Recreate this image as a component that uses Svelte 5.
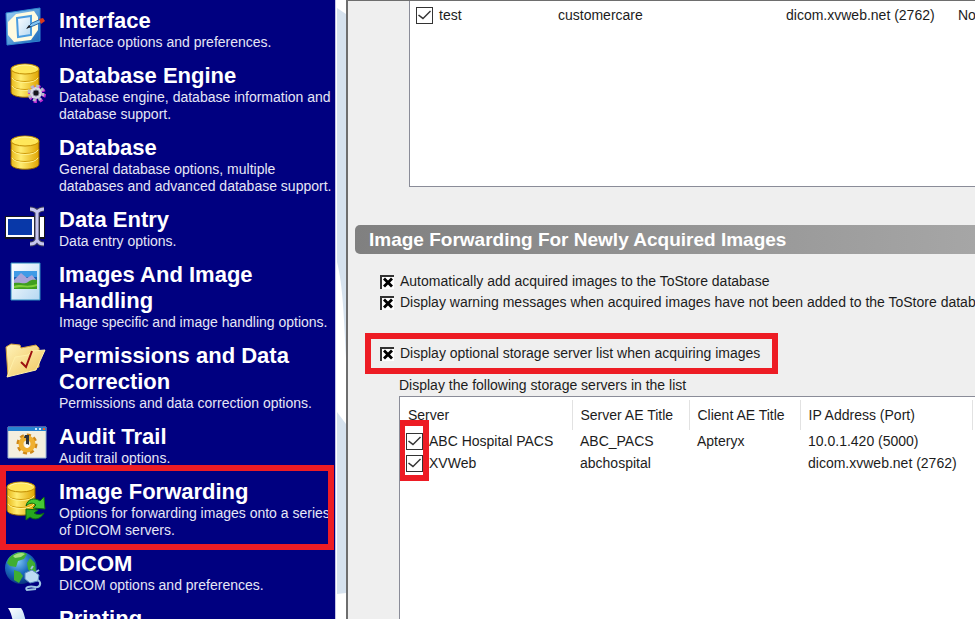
<script>
    let sections = [
        { id: 'interface', title: 'Interface', text: 'Interface options and preferences.' },
        { id: 'engine', title: 'Database Engine', text: 'Database engine, database information and database support.' },
        { id: 'database', title: 'Database', text: 'General database options, multiple databases and advanced database support.' },
        { id: 'entry', title: 'Data Entry', text: 'Data entry options.' },
        { id: 'images', title: 'Images And Image Handling', text: 'Image specific and image handling options.' },
        { id: 'permissions', title: 'Permissions and Data Correction', text: 'Permissions and data correction options.' },
        { id: 'audit', title: 'Audit Trail', text: 'Audit trail options.' },
        { id: 'forwarding', title: 'Image Forwarding', text: 'Options for forwarding images onto a series of DICOM servers.' },
        { id: 'dicom', title: 'DICOM', text: 'DICOM options and preferences.' },
        { id: 'printing', title: 'Printing', text: '' },
    ]
    let active = 'forwarding'

    let forward_servers = [
        { enabled: true, name: 'test', server_ae: 'customercare', client_ae: '', address: 'dicom.xvweb.net (2762)', extra: 'No' },
    ]

    let storage_servers = [
        { enabled: true, name: 'ABC Hospital PACS', server_ae: 'ABC_PACS', client_ae: 'Apteryx', address: '10.0.1.420 (5000)' },
        { enabled: true, name: 'XVWeb', server_ae: 'abchospital', client_ae: '', address: 'dicom.xvweb.net (2762)' },
    ]

    let auto_add = true
    let show_warning = true
    let show_list = true
</script>

<svg class="defs" aria-hidden="true">
    <defs>
        <linearGradient id="gold">
            <stop offset="0" stop-color="#e8b818" />
            <stop offset="0.35" stop-color="#ffec70" />
            <stop offset="1" stop-color="#e0a400" />
        </linearGradient>
        <linearGradient id="blue" x2="1" y2="1">
            <stop offset="0" stop-color="#9fd4f8" />
            <stop offset="1" stop-color="#1565b8" />
        </linearGradient>
        <linearGradient id="paper" x2="1" y2="1">
            <stop offset="0" stop-color="#ffffff" />
            <stop offset="1" stop-color="#b5d8f2" />
        </linearGradient>
        <linearGradient id="folder" x2="1" y2="1">
            <stop offset="0" stop-color="#fff3ba" />
            <stop offset="1" stop-color="#efc45a" />
        </linearGradient>
        <radialGradient id="globe" cx="0.4" cy="0.3" r="0.75">
            <stop offset="0" stop-color="#7cc6f4" />
            <stop offset="0.5" stop-color="#1c6cc0" />
            <stop offset="1" stop-color="#062c78" />
        </radialGradient>
    </defs>
</svg>

{#snippet barrel()}
    <path d="M6 6v23c0 7 28 7 28 0V6z" fill="url(#gold)" stroke="#8a5a00" />
    <path d="M6 14c2 6 26 6 28 0M6 22c2 6 26 6 28 0" fill="none" stroke="#cf9a08" />
    <path d="M7 15c3 6 23 6 26 0M7 23c3 6 23 6 26 0" fill="none" stroke="#fff08a" />
    <ellipse cx="20" cy="6" rx="14" ry="5" fill="#ffe75a" stroke="#c08c00" />
    <path d="M9 5c4-4 18-4 22 0" fill="none" stroke="#fff7a8" />
{/snippet}

{#snippet icon(id)}
    <svg class="icon" viewBox="0 0 40 40" aria-hidden="true">
        {#if id === 'interface'}
            <path d="M1 5 35 0v33L2 37z" fill="url(#blue)" stroke="#2f86d0" />
            <path d="M11 6 29 3l4 6v13l-7 10-17 2-6-7V14z" fill="#fffbe0" />
            <path d="m12 10 14-2v19l-13 2z" fill="url(#paper)" stroke="#4a9de0" stroke-width="2" />
            <path d="m22 20 5-5 9-4 1 3-9 4z" fill="#7ec3f2" stroke="#2868a8" />
            <path d="m21 21 3-4 2 2z" fill="#222" />
            <path d="m34 11 4-1 2 3-4 3z" fill="#d93a1c" />
        {:else if id === 'engine'}
            {@render barrel()}
            <g transform="translate(31 30)">
                <circle cx="1" cy="1" r="7" fill="none" stroke="#c02bd0" stroke-width="4" stroke-dasharray="3 2.5" />
                <circle r="6" fill="#d8d8e4" />
                <circle r="7" fill="none" stroke="#b8b8cc" stroke-width="3" stroke-dasharray="3 2.5" />
                <circle r="3" fill="#15151c" stroke="#77778a" />
            </g>
        {:else if id === 'database'}
            {@render barrel()}
        {:else if id === 'entry'}
            <path d="M0 9h40v23H0z" fill="#15151c" />
            <path d="M1 10h28v20H1zM35 10h4v20h-4z" fill="#fff" />
            <path d="M3 12h24v16H3z" fill="#0838a8" />
            <path d="M25 2c4 0 5 1 7 3 2-2 3-3 7-3M32 5v29M25 37c4 0 5-1 7-4 2 3 3 4 7 4" fill="none" stroke="#44445c" stroke-width="5" />
            <path d="M25 2c4 0 5 1 7 3 2-2 3-3 7-3M32 5v29M25 37c4 0 5-1 7-4 2 3 3 4 7 4" fill="none" stroke="#c6c6ee" stroke-width="3" />
        {:else if id === 'images'}
            <path d="M6 1h29v37H6z" fill="url(#paper)" stroke="#2d8dc0" />
            <path d="M9 9h23v18H9z" fill="#1c5fb4" />
            <path d="M9 9h23v6H9z" fill="#3f9be6" />
            <path d="m9 18 7-7 6 5 5-3 5 6v4H9z" fill="#a9a4d8" />
            <path d="M9 21c7-1 10 2 14-1s6-2 9-2v9H9z" fill="#3f9e20" />
            <path d="M9 24c8-3 10 2 23-2v2c-10 3-14 0-23 2z" fill="#7fd03c" />
        {:else if id === 'permissions'}
            <path d="m1 4 5-3 9 1 1 3 15-3 3 3v19L3 33z" fill="url(#folder)" stroke="#d0a040" />
            <path d="m2 34 8-20 13-2 4-4 13-1-9 20z" fill="url(#folder)" stroke="#fff0a8" />
            <path d="m16 19 5 5 6-16" fill="none" stroke="#9c1010" stroke-width="2" />
        {:else if id === 'audit'}
            <path d="M3 3h38v31H3z" fill="#f4efdf" stroke="#9cb8d4" />
            <path d="M3 3h38v4H3z" fill="#2783d0" />
            <path d="M30 5h2m2 0h2" stroke="#cfe8ff" stroke-width="2" />
            <path d="M38 5h2" stroke="#f0602c" stroke-width="2" />
            <circle cx="22" cy="20" r="9" fill="none" stroke="#d08818" stroke-width="3" stroke-dasharray="4 3" />
            <circle cx="22" cy="20" r="6" fill="none" stroke="#f0b030" stroke-width="5" />
            <path d="M20 11h4v10h-3v-7h-2z" fill="#30343c" />
            <circle cx="22" cy="22" r="2" fill="#fff" />
        {:else if id === 'forwarding'}
            <g transform="translate(-4 2)">{@render barrel()}</g>
            <path d="M21 27c1-7 9-9 14-5l4-4 1 12-12-1 3-3c-3-3-7-2-10 1z" fill="#45c832" stroke="#0c6a10" />
            <path d="M39 34c-4 7-10 7-14 4l-4 3V30l12 1-4 3c3 2 6 2 10 0z" fill="#27a61e" stroke="#0c6a10" />
        {:else if id === 'dicom'}
            <circle cx="16" cy="17" r="16" fill="url(#globe)" />
            <path d="M4 7C9 1 18 0 22 3l-3 5-6 2-2 6-6-1-3-3zM25 7l5 5 1 9-4 4-4-7-1-6zM9 19l6 2 3 4-4 7-5-3z" fill="#3fae32" />
            <path d="M8 5c4-3 9-4 12-2l-4 3-6 1z" fill="#a4e27c" />
            <path d="m20 22 7-3 7 5-1 6-8 2-5-4z" fill="#bcdcf4" stroke="#5a8cc0" />
            <path d="m26 18 2-3m3 6 3-2M33 29c4 3 2 8-3 7s-11 0-8 3l9-1" fill="none" stroke="#9cc4e4" stroke-width="2" />
        {:else}
            <path d="M3 2h13c4 5 3 11 7 17H9C7 13 7 8 3 2z" fill="url(#paper)" />
            <path d="M1 18h36v18H1z" fill="#c8ccd8" />
        {/if}
    </svg>
{/snippet}

{#snippet server_name(server)}
    <label class="server">
        <input class="tick" type="checkbox" bind:checked={server.enabled} />
        {server.name}
    </label>
{/snippet}

<div class="window">
    <nav class="sidebar">
        {#each sections as section}
            <a class="section" class:active={section.id === active} href="#{section.id}">
                {@render icon(section.id)}
                <span class="section-body">
                    <span class="section-title">{section.title}</span>
                    <span class="section-text">{section.text}</span>
                </span>
            </a>
        {/each}
    </nav>

    <svg class="divider" viewBox="0 0 10 619" preserveAspectRatio="none" aria-hidden="true">
        <path d="M1 8l9 6v344C8 320 7 285 1 262zM1 412l9 12v169l-9 1z" fill="#d6e2ee" />
    </svg>

    <main class="panel">
        <div class="list list-top">
            <table>
                <colgroup>
                    <col class="col-name-short" /><col class="col-server" /><col class="col-client" /><col class="col-address" /><col />
                </colgroup>
                <tbody>
                    {#each forward_servers as server}
                        <tr>
                            <td>{@render server_name(server)}</td>
                            <td>{server.server_ae}</td>
                            <td>{server.client_ae}</td>
                            <td>{server.address}</td>
                            <td>{server.extra}</td>
                        </tr>
                    {/each}
                </tbody>
            </table>
        </div>

        <h2 class="band">Image Forwarding For Newly Acquired Images</h2>

        <div class="options">
            <label class="option">
                <input class="cross" type="checkbox" bind:checked={auto_add} />
                Automatically add acquired images to the ToStore database
            </label>
            <label class="option">
                <input class="cross" type="checkbox" bind:checked={show_warning} />
                Display warning messages when acquired images have not been added to the ToStore database
            </label>
        </div>

        <label class="option marked">
            <input class="cross" type="checkbox" bind:checked={show_list} />
            Display optional storage server list when acquiring images
        </label>

        <p class="caption">Display the following storage servers in the list</p>

        <div class="list list-bottom">
            <table>
                <colgroup>
                    <col class="col-name" /><col class="col-server" /><col class="col-client" /><col class="col-address" /><col />
                </colgroup>
                <thead>
                    <tr>
                        <th>Server</th>
                        <th>Server AE Title</th>
                        <th>Client AE Title</th>
                        <th>IP Address (Port)</th>
                        <th></th>
                    </tr>
                </thead>
                <tbody>
                    {#each storage_servers as server}
                        <tr>
                            <td>{@render server_name(server)}</td>
                            <td>{server.server_ae}</td>
                            <td>{server.client_ae}</td>
                            <td>{server.address}</td>
                            <td></td>
                        </tr>
                    {/each}
                </tbody>
            </table>
            <div class="highlight"></div>
        </div>
    </main>
</div>

<style>
    .defs {
        position: absolute;
        width: 0;
        height: 0;
    }

    .window {
        display: flex;
        height: 100vh;
        overflow: hidden;
        background: #fff;
        color: #1c1c1c;
        font-family: "Liberation Sans", Arial, sans-serif;
        font-size: 14px;
    }

    .sidebar {
        flex: 0 0 336px;
        box-sizing: border-box;
        display: flex;
        flex-direction: column;
        gap: 12px;
        padding: 8px 0 0 5px;
        background: #000080;
        border-right: 1px solid #c4c4e4;
    }

    .section {
        position: relative;
        display: flex;
        gap: 14px;
        color: #fff;
        text-decoration: none;
    }

    .icon {
        flex: 0 0 40px;
        height: 40px;
        overflow: visible;
    }

    .section-title {
        display: block;
        font-size: 22px;
        font-weight: bold;
        line-height: 26px;
    }

    .section-text {
        display: block;
        line-height: 17px;
        color: #e6e6f6;
    }

    .section.active::after {
        content: "";
        position: absolute;
        inset: -14px 1px -11px -5px;
        border: 6px solid #ed1c24;
    }

    .divider {
        flex: 0 0 10px;
        width: 10px;
        height: 100%;
    }

    .panel {
        flex: 1;
        min-width: 0;
        display: flex;
        flex-direction: column;
        background: #efefef;
        border-left: 2px solid #6e6e6e;
        border-top: 1px solid #6e6e6e;
    }

    .list {
        position: relative;
        overflow: hidden;
        background: #fff;
        border: 1px solid #8a8c98;
        border-right: 0;
    }

    .list-top {
        flex: 0 0 182px;
        margin-left: 61px;
        border-top: 0;
        padding-top: 3px;
    }

    .list-bottom {
        flex: 1;
        margin-left: 51px;
        border-bottom: 0;
        padding-top: 3px;
    }

    table {
        width: 100%;
        min-width: 640px;
        table-layout: fixed;
        border-collapse: collapse;
    }

    .col-name-short {
        width: 140px;
    }

    .col-name {
        width: 172px;
    }

    .col-server {
        width: 117px;
    }

    .col-client {
        width: 111px;
    }

    .col-address {
        width: 172px;
    }

    th,
    td {
        padding: 0 0 0 8px;
        text-align: left;
        font-weight: normal;
        white-space: nowrap;
    }

    th {
        height: 30px;
        border-right: 1px solid #e2e2e2;
    }

    td {
        height: 22px;
    }

    td:first-child {
        padding-left: 6px;
    }

    .server {
        display: flex;
        align-items: center;
        gap: 6px;
    }

    input {
        appearance: none;
        flex: none;
        box-sizing: border-box;
        margin: 0;
        background: #fff;
    }

    .tick {
        width: 17px;
        height: 17px;
        border: 1px solid #333;
    }

    .tick:checked::before {
        content: "";
        display: block;
        height: 15px;
        background: #333;
        clip-path: polygon(1px 8px, 2px 7px, 6px 10px, 13px 3px, 14px 4px, 6px 12px);
    }

    .cross {
        width: 14px;
        height: 14px;
        border: solid #333;
        border-width: 2px 0 0 2px;
    }

    .cross:checked::before {
        content: "";
        display: block;
        height: 12px;
        background: #000;
        clip-path: polygon(1px 3px, 3px 1px, 6px 4px, 9px 1px, 11px 3px, 8px 6px, 11px 9px, 9px 11px, 6px 8px, 3px 11px, 1px 9px, 4px 6px);
    }

    .band {
        margin: 38px 0 0 7px;
        padding-left: 14px;
        border-radius: 5px 0 0 5px;
        background: linear-gradient(to right, #808080, #a6a6a6);
        color: #fff;
        font-size: 19px;
        line-height: 29px;
        white-space: nowrap;
    }

    .options {
        margin: 17px 0 0 32px;
    }

    .option {
        display: flex;
        align-items: center;
        gap: 6px;
        line-height: 21px;
        white-space: nowrap;
    }

    .marked {
        align-self: flex-start;
        margin: 20px 0 0 17px;
        padding: 4px 12px 4px 9px;
        border: 6px solid #ed1c24;
    }

    .caption {
        margin: 0 0 0 51px;
        line-height: 22px;
    }

    /* drawn over the tick boxes of the first column */
    .highlight {
        position: absolute;
        top: 23px;
        left: -1px;
        box-sizing: border-box;
        width: 30px;
        height: 61px;
        border: 6px solid #ed1c24;
    }
</style>
